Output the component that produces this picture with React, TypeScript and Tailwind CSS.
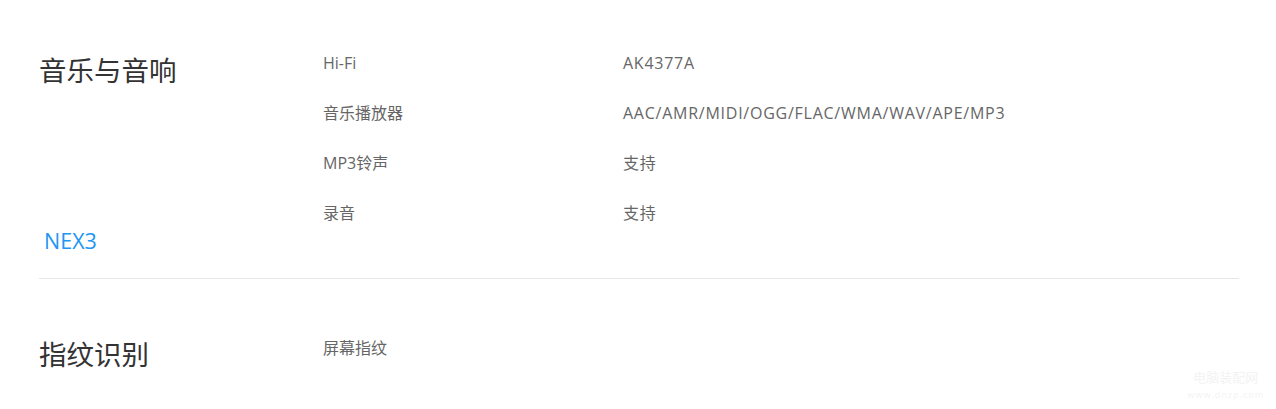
import React from 'react';

const font = { fontFamily: '"Open Sans", "Noto Sans CJK SC", sans-serif' };

type Row = { label: string; value?: string };

const Section: React.FC<{ title: string; rows: Row[]; tag?: string; pt: string; headMt: string }> = ({ title, rows, tag, pt, headMt }) => (
  <div className={`flex ${pt}`}>
    <div className="w-[284px] shrink-0 flex flex-col">
      <h2 className={`${headMt} text-[27.5px] leading-[36px] text-[#333]`}>{title}</h2>
      {tag && <div className="mt-[138px] pl-[5px] text-[21.5px] leading-[28px] text-[#2196f3]">{tag}</div>}
    </div>
    <div className="flex flex-col">
      {rows.map((r, i) => (
        <div key={i} className="flex h-[50px] items-center text-[16px] text-[#666]">
          <div className="w-[300px]">{r.label}</div>
          <div className="tracking-[0.75px]">{r.value}</div>
        </div>
      ))}
    </div>
  </div>
);

export default function App() {
  return (
    <div className="relative w-[1276px] h-[409px] bg-white overflow-hidden" style={font}>
      <div className="ml-[39px] w-[1200px]">
        <div className="pb-[23px]">
          <Section
            title="音乐与音响"
            tag="NEX3"
            pt="pt-[38px]"
            headMt="mt-[15px]"
            rows={[
              { label: 'Hi-Fi', value: 'AK4377A' },
              { label: '音乐播放器', value: 'AAC/AMR/MIDI/OGG/FLAC/WMA/WAV/APE/MP3' },
              { label: 'MP3铃声', value: '支持' },
              { label: '录音', value: '支持' },
            ]}
          />
        </div>
        <div className="h-px bg-[#e6e6e6]" />
        <Section title="指纹识别" pt="pt-[44px]" headMt="mt-[14px]" rows={[{ label: '屏幕指纹' }]} />
      </div>
      <div className="absolute right-[12px] bottom-[10px] flex flex-col items-center text-[#f3f3f3] leading-none">
        <span className="text-[13px]">电脑装配网</span>
        <span className="mt-[6px] text-[9px] tracking-[1px]">www.dnzp.com</span>
      </div>
    </div>
  );
}
